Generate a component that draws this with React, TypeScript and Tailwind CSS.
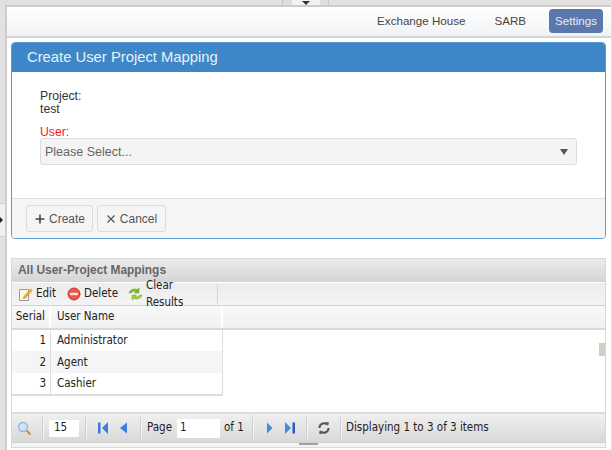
import React from "react";

const condensed = "font-['DejaVu_Sans_Condensed','DejaVu_Sans',sans-serif]";

const Sep = ({ className }: { className: string }) => (
  <div className={`w-px h-[22px] bg-[#cfcfcf] border-r border-[#f4f4f4] box-content ${className}`} />
);

const PagerBtn = ({ dir, end, className }: { dir: "l" | "r"; end?: boolean; className: string }) => (
  <svg width="12" height="14" viewBox="0 0 12 14" className={className}>
    {dir === "l" ? (
      <>
        {end && <rect x="1" y="1.5" width="2.5" height="11" fill="#3b78d8" />}
        <path d={end ? "M11 1 L5 7 L11 13 Z" : "M9 1.5 L2 7 L9 12.5 Z"} fill="#3f7fdc" />
      </>
    ) : (
      <>
        <path d={end ? "M1 1 L7 7 L1 13 Z" : "M3 1.5 L8.5 7 L3 12.5 Z"} fill="#3f8fe0" />
        {end && <rect x="8.5" y="1.5" width="2.5" height="11" fill="#2a5fc0" />}
      </>
    )}
  </svg>
);

const rows = [
  { n: 1, name: "Administrator", h: "h-[21px] bg-white" },
  { n: 2, name: "Agent", h: "h-[22px] bg-[#f5f5f5]" },
  { n: 3, name: "Cashier", h: "h-[21px] bg-white" },
];

export default function App() {
  return (
    <div className="w-[612px] h-[450px] overflow-hidden flex flex-col bg-[#e1e1e1] font-['Liberation_Sans',sans-serif] relative">
      {/* top handle */}
      <div className="h-[5px] shrink-0 flex justify-center">
        <div className="w-[47px] h-[5px] mr-[1px] border-x border-[#c4c4c4] bg-[#dedede] flex justify-center">
          <div className="w-[28px] h-[5px] bg-[#f2f2f2] flex justify-center items-end">
            <div className="w-0 h-0 border-x-[4px] border-x-transparent border-t-[4px] border-t-[#333]" />
          </div>
        </div>
      </div>
      <div className="flex-1 flex min-h-0">
        <div className="w-[5px] shrink-0 relative">
          <div className="absolute left-0 top-[198px] w-[5px] h-[34px] bg-[#f0f0f0] border-y border-[#cfcfcf] flex items-center">
            <div className="w-0 h-0 border-y-[3px] border-y-transparent border-l-[3px] border-l-[#222]" />
          </div>
        </div>
        <div className="flex-1 min-w-0 flex flex-col bg-white border-t-2 border-l-2 border-[#cdcdcd] mr-[1px]">
          {/* nav */}
          <div className="h-[31px] shrink-0 flex items-center justify-end bg-gradient-to-b from-white to-[#f1f2f4] border-b-2 border-[#d6d6d6] text-[11.6px] text-[#444]">
            <span className="mr-[29px] mb-[2px]">Exchange House</span>
            <span className="mr-[23px] mb-[2px]">SARB</span>
            <span className="w-[54px] h-[24px] mr-[8px] mb-[2px] rounded-[4px] bg-[#5b78ad] text-[#e6ecf5] flex items-center justify-center">Settings</span>
          </div>

          {/* create panel */}
          <div className="mt-[4px] ml-[4px] mr-[5px] h-[197px] shrink-0 rounded-[4px] border border-[#5b9bd5] flex flex-col overflow-hidden">
            <div className="h-[29px] shrink-0 bg-[#3d87c8] flex items-center pl-[15px] text-[14.8px] text-[#e8f1f8]">
              Create User Project Mapping
            </div>
            <div className="flex-1 pl-[28px] pr-[28px] pt-[18px] text-[12.2px] leading-[13px] text-[#333]">
              <div>Project:</div>
              <div>test</div>
              <div className="mt-[10px] h-[12px] text-[#f01818]">User:</div>
              <div className="h-[27px] rounded-[3px] border border-[#dcdcdc] bg-[#f4f4f4] flex items-center justify-between pl-[4px] pr-[8px] text-[12.5px] text-[#666]">
                <span className="pt-[2px]">Please Select...</span>
                <div className="w-0 h-0 border-x-[4px] border-x-transparent border-t-[6px] border-t-[#555]" />
              </div>
            </div>
            <div className="h-[40px] shrink-0 bg-[#f5f5f5] border-t border-[#dedede] flex items-center pl-[14px] gap-[4px] text-[12px] text-[#555]">
              <div className="h-[27px] w-[67px] rounded-[3px] border border-[#dcdcdc] flex items-center justify-center gap-[3px]">
                <svg width="12" height="12" viewBox="0 0 12 12"><path d="M6 1.5V10.5M1.5 6H10.5" stroke="#444" strokeWidth="1.6" /></svg>
                <span>Create</span>
              </div>
              <div className="h-[27px] w-[69px] rounded-[3px] border border-[#dcdcdc] flex items-center justify-center gap-[4px]">
                <svg width="10" height="10" viewBox="0 0 10 10"><path d="M1.5 1.5L8.5 8.5M8.5 1.5L1.5 8.5" stroke="#555" strokeWidth="1.2" /></svg>
                <span>Cancel</span>
              </div>
            </div>
          </div>

          {/* grid */}
          <div className={`mt-[19px] ml-[4px] mr-[5px] mb-[2px] flex-1 min-h-0 flex flex-col border border-[#d8d8d8] ${condensed} text-[11px] text-[#222]`}>
            <div className="h-[23px] shrink-0 bg-gradient-to-b from-[#ececec] to-[#d4d4d4] flex items-center pl-[6px] font-bold text-[#666] text-[11.9px] font-['Liberation_Sans',sans-serif]">
              All User-Project Mappings
            </div>
            <div className="h-[24px] shrink-0 bg-gradient-to-b from-[#ececec] to-[#f4f4f4] border-t border-white border-b border-b-[#d2d2d2] flex items-center pl-[6px] text-[11.5px]">
              <svg width="15" height="15" viewBox="0 0 15 15">
                <path d="M1.5 2.5H10.5V13.5H1.5Z" fill="#fdf6e0" stroke="#9a9a9a" />
                <path d="M6 9.5L12.5 2L14 3.5L7.5 11L5.5 11.5Z" fill="#f0b429" stroke="#b9801a" strokeWidth="0.6" />
              </svg>
              <span className="ml-[3px] w-[20px]">Edit</span>
              <svg width="14" height="14" viewBox="0 0 14 14" className="ml-[11px]">
                <circle cx="7" cy="7" r="6" fill="#e8574a" stroke="#c9342a" />
                <rect x="3" y="5.8" width="8" height="2.4" fill="#fbe4e0" />
              </svg>
              <span className="ml-[3px] w-[33px]">Delete</span>
              <svg width="15" height="14" viewBox="0 0 15 14" className="ml-[11px]">
                <path d="M1 6C2 2.5 6 1 9.5 2.5L11 1V6H6.5L8 4.5C6 3.8 4 4.5 3 6Z" fill="#7cb82f" stroke="#5b8f1e" strokeWidth="0.4" />
                <path d="M14 8C13 11.5 9 13 5.5 11.5L4 13V8H8.5L7 9.5C9 10.2 11 9.5 12 8Z" fill="#a2cf3f" stroke="#5b8f1e" strokeWidth="0.4" />
              </svg>
              <span className="ml-[3px] w-[66px]">Clear Results</span>
              <div className="w-px h-[20px] bg-[#d6d6d6] ml-[5px]" />
            </div>
            <div className="h-[24px] shrink-0 flex bg-gradient-to-b from-[#f9f9f9] to-[#eff0f2] border-b-2 border-[#d8d8d8] text-[11.5px]">
              <div className="w-[39px] pr-[4px] flex items-center justify-end border-r-2 border-white">Serial</div>
              <div className="w-[172px] pl-[6px] flex items-center border-r-2 border-white">User Name</div>
            </div>
            <div className="flex-1 min-h-0 relative bg-white">
              <div className="w-[211px] border-b-2 border-r border-[#dcdcdc]">
                {rows.map((r) => (
                  <div key={r.n} className={`${r.h} flex items-center text-[11.5px]`}>
                    <div className="w-[39px] h-full pr-[4px] pt-[1px] flex items-center justify-end border-r border-[#dcdcdc]">{r.n}</div>
                    <div className="pl-[6px] pt-[1px]">{r.name}</div>
                  </div>
                ))}
              </div>
              {/* scroll thumb */}
              <div className="absolute right-0 top-[13px] w-[6px] h-[13px] bg-[#cfcfc4]" />
            </div>
            <div className="h-[30px] shrink-0 bg-gradient-to-b from-[#f0f0f0] to-[#d8d8d8] border-t-2 border-[#dcdcdc] flex items-center pl-[5px] text-[11.5px]">
              <svg width="15" height="15" viewBox="0 0 15 15">
                <circle cx="6" cy="6" r="4.5" fill="#cfe3f7" stroke="#8fb6dc" strokeWidth="1.3" />
                <path d="M9.5 9.5L13.5 13.5" stroke="#c9913d" strokeWidth="2.2" />
              </svg>
              <Sep className="ml-[10px]" />
              <div className="ml-[5px] w-[30px] h-[17px] bg-white flex items-center pl-[5px]">15</div>
              <Sep className="ml-[6px]" />
              <PagerBtn dir="l" end className="ml-[10px]" />
              <PagerBtn dir="l" className="ml-[9px]" />
              <Sep className="ml-[10px]" />
              <span className="ml-[5px] w-[25px]">Page</span>
              <div className="w-[43px] h-[19px] ml-[5px] bg-white flex items-center pl-[3px]">1</div>
              <span className="ml-[4px] w-[20px]">of 1</span>
              <Sep className="ml-[8px]" />
              <PagerBtn dir="r" className="ml-[10px]" />
              <PagerBtn dir="r" end className="ml-[8px]" />
              <Sep className="ml-[10px]" />
              <svg width="14" height="14" viewBox="0 0 14 14" className="ml-[9px]">
                <path d="M2.5 7A4.5 4.5 0 0 1 10 3.5M11.5 7A4.5 4.5 0 0 1 4 10.5" fill="none" stroke="#555" strokeWidth="2" />
                <path d="M8.5 1L12 1.5L11 5Z M5.5 13L2 12.5L3 9Z" fill="#555" />
              </svg>
              <Sep className="ml-[9px]" />
              <span className="ml-[4px]">Displaying 1 to 3 of 3 items</span>
            </div>
            {/* bottom handle */}
            <div className="h-[5px] shrink-0 bg-[#f4f4f4] border-t border-[#cfcfcf] flex justify-center">
              <div className="w-[19px] h-[2px] bg-[#a0a0a0]" />
            </div>
          </div>
        </div>
      </div>
    </div>
  );
}
